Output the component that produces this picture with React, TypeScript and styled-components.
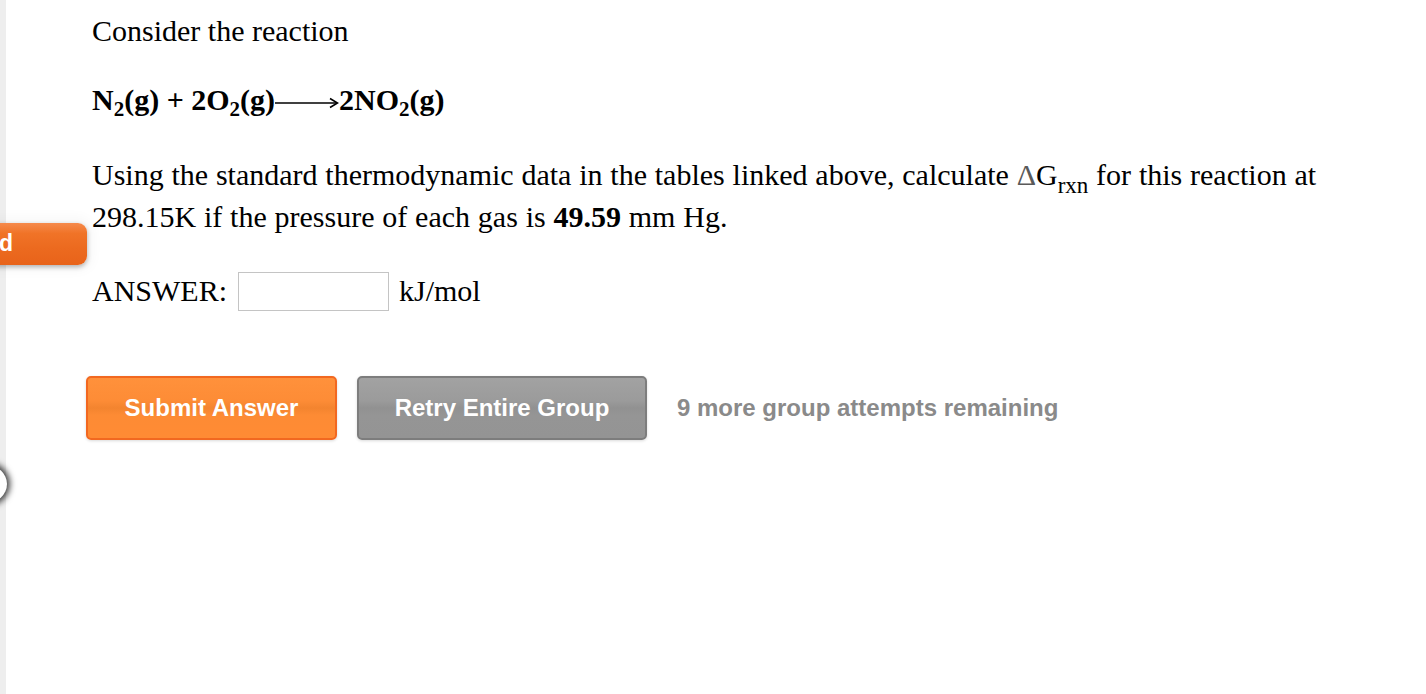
import React from 'react';
import styled, { createGlobalStyle } from 'styled-components';

const GlobalStyle = createGlobalStyle`
  html, body {
    margin: 0;
    padding: 0;
    background: #ffffff;
  }
  body {
    font-family: "Liberation Serif", "Times New Roman", serif;
    color: #000000;
  }
`;

const Arrow = () => (
  <svg width="64" height="14" viewBox="0 0 64 14" style={{ verticalAlign: 'middle' }}>
    <line x1="0" y1="7" x2="62" y2="7" stroke="#000" strokeWidth="1.6" />
    <path d="M55 2.5 L62.5 7 L55 11.5" fill="none" stroke="#000" strokeWidth="1.6" />
  </svg>
);

const App = () => {
  return (
    <>
      <GlobalStyle />
      <Page>
        <Strip />
        <Main>
          <Title>Consider the reaction</Title>
          <Equation>
            N<sub>2</sub>(g) + 2O<sub>2</sub>(g)
            <Arrow />
            2NO<sub>2</sub>(g)
          </Equation>
          <Question>
            Using the standard thermodynamic data in the tables linked above, calculate{' '}
            <Delta>Δ</Delta>G<Sub>rxn</Sub> for this reaction at 298.15K if the pressure of each
            gas is <b>49.59</b> mm Hg.
          </Question>
          <AnswerRow>
            <span>ANSWER:</span>
            <AnswerInput type="text" />
            <span>kJ/mol</span>
          </AnswerRow>
          <ButtonRow>
            <ActionButton $variant="orange">Submit Answer</ActionButton>
            <ActionButton $variant="gray">Retry Entire Group</ActionButton>
            <Attempts>9 more group attempts remaining</Attempts>
          </ButtonRow>
        </Main>
        <SideTab>d</SideTab>
        <SideKnob />
      </Page>
    </>
  );
};

export default App;

const Page = styled.div`
  position: relative;
  display: flex;
  min-height: 694px;
  overflow: hidden;
`;

const Strip = styled.div`
  flex: 0 0 6px;
  background: #eeeeee;
`;

const Main = styled.main`
  display: flex;
  flex-direction: column;
  padding-left: 86px;
  font-size: 30px;
  line-height: 42px;
`;

const Title = styled.p`
  margin: 10px 0 0;
`;

const Equation = styled.p`
  margin: 27px 0 0;
  font-weight: bold;

  sub {
    font-size: 21px;
    line-height: 0;
    vertical-align: -6px;
  }
`;

const Question = styled.p`
  margin: 33px 0 0;
  width: 1260px;
  word-spacing: 0.3px;
`;

const Delta = styled.span`
  color: #5a5a5a;
`;

const Sub = styled.sub`
  font-size: 23px;
  line-height: 0;
  vertical-align: -8px;
`;

const AnswerRow = styled.div`
  display: flex;
  align-items: center;
  gap: 11px;
  margin-top: 32px;
  height: 42px;
`;

const AnswerInput = styled.input`
  box-sizing: border-box;
  width: 151px;
  height: 39px;
  margin: 0 -1px 0 0;
  border: 1px solid #c4c4c4;
  background: #ffffff;
`;

const ButtonRow = styled.div`
  display: flex;
  align-items: center;
  margin-top: 64px;
  margin-left: -6px;
`;

const ActionButton = styled.button<{ $variant: 'orange' | 'gray' }>`
  box-sizing: border-box;
  height: 64px;
  width: ${({ $variant }) => ($variant === 'orange' ? '251px' : '290px')};
  margin-right: ${({ $variant }) => ($variant === 'orange' ? '20px' : '30px')};
  border-radius: 5px;
  border: 2px solid ${({ $variant }) => ($variant === 'orange' ? '#f26820' : '#7d7d7d')};
  background: ${({ $variant }) =>
    $variant === 'orange'
      ? 'linear-gradient(#ff913b 0%, #fd8c36 38%, #f3842f 50%, #fd8b34 62%, #ff8b34 100%)'
      : 'linear-gradient(#a2a2a2 0%, #9b9b9b 38%, #919191 50%, #959595 62%, #949494 100%)'};
  box-shadow: 0 1px 3px rgba(0, 0, 0, 0.15);
  color: #ffffff;
  font-family: "Liberation Sans", Arial, sans-serif;
  font-weight: bold;
  font-size: 24px;
  padding: 0;
`;

const Attempts = styled.span`
  color: #8a8a8a;
  font-family: "Liberation Sans", Arial, sans-serif;
  font-weight: bold;
  font-size: 24px;
`;

const SideTab = styled.div`
  position: absolute;
  left: -8px;
  top: 223px;
  box-sizing: border-box;
  width: 95px;
  height: 42px;
  padding-left: 7px;
  border-radius: 0 9px 9px 0;
  background: linear-gradient(#f58a4c 0%, #f07327 25%, #ec6a1f 60%, #e8631a 100%);
  box-shadow: 0 2px 5px rgba(0, 0, 0, 0.3), 0 0 12px 6px rgba(0, 0, 0, 0.03);
  color: #ffffff;
  font-family: "Liberation Sans", Arial, sans-serif;
  font-weight: bold;
  font-size: 23px;
  line-height: 40px;
`;

const SideKnob = styled.div`
  position: absolute;
  left: -34px;
  top: 465px;
  width: 41px;
  height: 38px;
  border-radius: 50%;
  background: #ffffff;
  box-shadow: 0 0 6px 3px rgba(0, 0, 0, 0.75);
`;
